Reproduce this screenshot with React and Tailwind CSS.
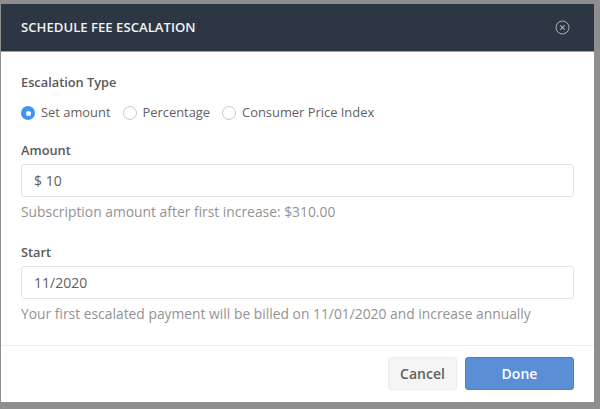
import React from "react";

function Radio({ label, checked }) {
  return (
    <label className="flex items-center gap-[6px]">
      {checked ? (
        <span className="mt-[2px] flex h-[14px] w-[14px] items-center justify-center rounded-full bg-[#3b97f3]">
          <span className="h-[5px] w-[5px] rounded-full bg-white"></span>
        </span>
      ) : (
        <span className="mt-[2px] h-[14px] w-[14px] rounded-full border border-[#c9c9c9] bg-white"></span>
      )}
      <span className="text-[12.9px] leading-[20px] text-[#5f5f5f]">{label}</span>
    </label>
  );
}

export default function App() {
  return (
    <div className="h-[409px] w-[600px] bg-[#8e8e8e] pt-[4px] pl-[1px] font-['Open_Sans',sans-serif]">
      <div className="flex h-[398px] w-[593px] flex-col bg-white">
        {/* Header */}
        <div className="flex h-[48px] items-center justify-between border-b border-[#9aa0a6] bg-[#2d3744] pl-[20px] pr-[24px]">
          <span className="text-[13.15px] font-semibold text-[#f2f3f4]">SCHEDULE FEE ESCALATION</span>
          <svg width="15" height="15" viewBox="0 0 15 15" fill="none" stroke="#a9afb6">
            <circle cx="7.5" cy="7.5" r="6.5" strokeWidth="1" />
            <path d="M5.4 5.4l4.2 4.2M9.6 5.4l-4.2 4.2" strokeWidth="1.2" />
          </svg>
        </div>

        {/* Body */}
        <div className="flex flex-1 flex-col px-[20px] pt-[20px]">
          <div className="text-[12.8px] font-semibold leading-[20px] text-[#5a5a5a]">Escalation Type</div>
          <div className="mt-[10px] flex gap-[12px]">
            <Radio label="Set amount" checked />
            <Radio label="Percentage" />
            <Radio label="Consumer Price Index" />
          </div>

          <div className="mt-[18px] text-[12.8px] font-semibold leading-[20px] text-[#5a5a5a]">Amount</div>
          <div className="mt-[4px] flex h-[33px] items-center rounded-[3px] border border-[#e4e4e4] pl-[12px] text-[14px] text-[#5f5f5f]">
            $ 10
          </div>
          <div className="mt-[5px] text-[13.85px] leading-[20px] text-[#939393]">
            Subscription amount after first increase: $310.00
          </div>

          <div className="mt-[20px] text-[12.8px] font-semibold leading-[20px] text-[#5a5a5a]">Start</div>
          <div className="mt-[4px] flex h-[33px] items-center rounded-[3px] border border-[#e4e4e4] pl-[12px] text-[14px] text-[#5f5f5f]">
            11/2020
          </div>
          <div className="mt-[5px] text-[13.85px] leading-[20px] text-[#939393]">
            Your first escalated payment will be billed on 11/01/2020 and increase annually
          </div>
        </div>

        {/* Footer */}
        <div className="flex h-[57px] items-start justify-end gap-[8px] border-t border-[#eeeeee] pr-[20px] pt-[11px]">
          <button className="h-[33px] w-[69px] rounded-[3px] border border-[#ececec] bg-[#f5f5f5] text-[14px] font-semibold text-[#5f5f5f]">
            Cancel
          </button>
          <button className="h-[33px] w-[109px] rounded-[3px] border border-[#4c82c8] bg-[#5a8fd6] text-[14px] font-semibold text-white">
            Done
          </button>
        </div>
      </div>
    </div>
  );
}
